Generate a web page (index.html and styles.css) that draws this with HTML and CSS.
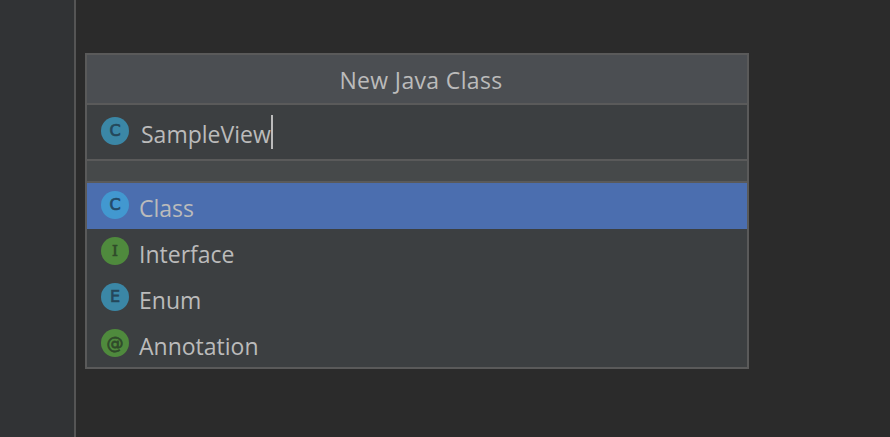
FILE: index.html
```html
<!DOCTYPE html>
<html lang="en">
<head>
<meta charset="utf-8">
<title>New Java Class</title>
<link rel="stylesheet" href="styles.css">
</head>
<body>
<div class="app">
  <aside class="sidebar"></aside>
  <main class="main">
    <section class="dialog">
      <header class="title">New Java Class</header>
      <div class="input-row">
        <span class="icon icon-blue">C</span>
        <span class="input-text">SampleView</span><span class="caret"></span>
      </div>
      <div class="strip"></div>
      <ul class="list">
        <li class="item selected"><span class="icon icon-light">C</span><span class="label">Class</span></li>
        <li class="item"><span class="icon icon-green serif">I</span><span class="label">Interface</span></li>
        <li class="item"><span class="icon icon-blue">E</span><span class="label">Enum</span></li>
        <li class="item"><span class="icon icon-green at">@</span><span class="label">Annotation</span></li>
      </ul>
    </section>
  </main>
</div>
</body>
</html>
```

FILE: styles.css
```css
* { box-sizing: border-box; }
html, body { margin: 0; height: 100%; }
body {
  background: #2b2b2b;
  color: #bbbbbb;
  font-family: "Open Sans", "Noto Sans", sans-serif;
  overflow: hidden;
}
.app { display: flex; height: 437px; }
.sidebar {
  width: 76px;
  background: #313335;
  border-right: 2px solid #555555;
}
.main { flex: 1; padding: 53px 0 0 9px; }
.dialog {
  width: 664px;
  background: #3c3f41;
  border: 2px solid #5a5a5a;
}
.title {
  height: 50px;
  padding: 2px 0 0 8px;
  background: #4b4e52;
  border-bottom: 2px solid #5a5a5a;
  display: flex;
  align-items: center;
  justify-content: center;
  font-size: 23px;
  letter-spacing: 0.35px;
}
.input-row {
  height: 54px;
  display: flex;
  align-items: center;
  padding-left: 14px;
}
.input-text { margin-left: 12px; font-size: 23px; line-height: 30px; margin-top: 3px; }
.caret { width: 2px; height: 34px; background: #bbbbbb; margin-top: -1px; }
.strip {
  height: 24px;
  background: #46494a;
  border-top: 2px solid #5a5a5a;
  border-bottom: 2px solid #5a5a5a;
}
.list { list-style: none; margin: 0; padding: 0; }
.item {
  height: 46px;
  display: flex;
  padding: 8px 0 0 14px;
}
.selected { background: #4b6eaf; }
.icon {
  width: 28px;
  height: 28px;
  border-radius: 50%;
  flex: none;
  display: flex;
  align-items: center;
  justify-content: center;
  font-family: "DejaVu Sans", sans-serif;
  font-size: 16px;
  line-height: 28px;
  color: #24475a;
  -webkit-text-stroke: 0.7px currentColor;
}
.input-row .icon { margin-top: -2px; }
.icon-blue { background: #3b87a6; }
.icon-light { background: #4298d0; color: #234a68; }
.icon-green { background: #4f8a3d; color: #2f4a2a; }
.serif { font-family: "DejaVu Serif", serif; font-size: 15px; }
.at { font-size: 17px; }
.label { margin-left: 10px; font-size: 23px; line-height: 30px; margin-top: 2px; }
```
